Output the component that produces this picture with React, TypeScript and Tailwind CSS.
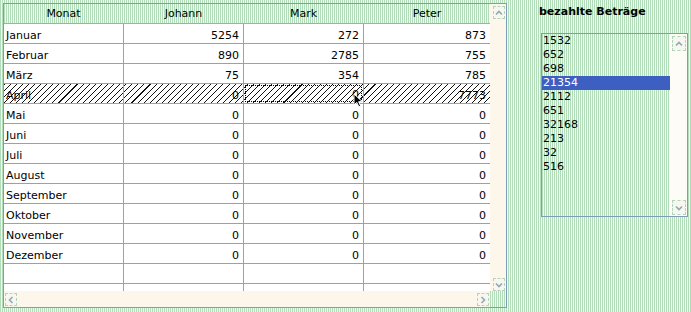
import React from "react";

const months = [
  "Januar", "Februar", "März", "April", "Mai", "Juni",
  "Juli", "August", "September", "Oktober", "November", "Dezember",
];

const values: number[][] = [
  [5254, 272, 873],
  [890, 2785, 755],
  [75, 354, 785],
  [0, 0, 7773],
];

const amounts = ["1532", "652", "698", "21354", "2112", "651", "32168", "213", "32", "516"];

type Dir = "up" | "down" | "left" | "right";

const chevrons: Record<Dir, string> = {
  up: "M2 6.5 L5 3.5 L8 6.5",
  down: "M2 3.5 L5 6.5 L8 3.5",
  left: "M6.5 2 L3.5 5 L6.5 8",
  right: "M3.5 2 L6.5 5 L3.5 8",
};

function ScrollBtn({ dir, big }: { dir: Dir; big?: boolean }) {
  return (
    <div
      className={
        big
          ? "w-[14px] h-[15px] border border-dashed border-[#b4d3ba] bg-[#f6f8ef] flex items-center justify-center"
          : "w-[12px] h-[13px] border border-dashed border-[#b4d3ba] bg-[#f6f8ef] flex items-center justify-center"
      }
    >
      <svg width="10" height="10" viewBox="0 0 10 10">
        <path d={chevrons[dir]} fill="none" stroke="#97a5b3" strokeWidth="1.6" />
      </svg>
    </div>
  );
}

function Cell({ text, right, last }: { text: string; right?: boolean; last?: boolean }) {
  return (
    <div
      className={
        (last ? "w-[126px] " : "w-[120px] border-r border-[#a0a0a0] ") +
        (right ? "flex items-center justify-end pr-[4px] pt-[5px]" : "flex items-center pl-[2px] pt-[5px]")
      }
    >
      {text}
    </div>
  );
}

export default function App() {
  return (
    <div className="w-[691px] h-[312px] flex pt-[3px] pl-[3px] font-['DejaVu_Sans',sans-serif] text-[11px] text-black bg-[image:repeating-linear-gradient(90deg,#b2dcba_0px,#b2dcba_1px,#f3faf1_1px,#f3faf1_2px)] overflow-hidden">
      {/* Tabelle */}
      <div className="w-[504px] h-[305px] border border-[#7f9db9] flex flex-col">
        <div className="flex h-[287px]">
          <div className="relative w-[486px] flex flex-col bg-white">
            <div className="flex h-[20px] border-b border-[#9db2a1] bg-[image:repeating-linear-gradient(90deg,#b2dcba_0px,#b2dcba_1px,#f3faf1_1px,#f3faf1_2px)]">
              {["Monat", "Johann", "Mark", "Peter"].map((h, i) => (
                <div
                  key={h}
                  className={
                    i < 3
                      ? "w-[120px] border-r border-[#f4faf4] flex items-center justify-center pt-[2px]"
                      : "w-[126px] flex items-center justify-center pt-[2px]"
                  }
                >
                  {h}
                </div>
              ))}
            </div>
            {months.map((m, i) => {
              const v = values[i] ?? [0, 0, 0];
              const hatched = i === 3;
              return (
                <div
                  key={m}
                  className={
                    hatched
                      ? "flex h-[20px] border-b border-[#a0a0a0] bg-[image:repeating-linear-gradient(135deg,#111_0px,#111_0.75px,transparent_0.75px,transparent_4.3px)]"
                      : "flex h-[20px] border-b border-[#a0a0a0]"
                  }
                >
                  <Cell text={m} />
                  <Cell text={String(v[0])} right />
                  {hatched ? (
                    <div className="w-[120px] border-r border-[#a0a0a0] p-[1px]">
                      <div className="h-full border border-dotted border-black flex items-center justify-end pr-[2px] pt-[3px]">
                        {v[1]}
                      </div>
                    </div>
                  ) : (
                    <Cell text={String(v[1])} right />
                  )}
                  <Cell text={String(v[2])} right last />
                </div>
              );
            })}
            <div className="flex h-[20px] border-b border-[#a0a0a0]">
              <Cell text="" />
              <Cell text="" />
              <Cell text="" />
              <Cell text="" last />
            </div>
            <div className="flex flex-1">
              <Cell text="" />
              <Cell text="" />
              <Cell text="" />
              <Cell text="" last />
            </div>
            {/* Mauszeiger */}
            <svg className="absolute left-[349px] top-[89px]" width="11" height="15" viewBox="0 0 11 15">
              <path d="M1 1 L1 12 L3.8 9.4 L5.8 13.8 L7.6 13 L5.6 8.7 L9.4 8.7 Z" fill="#000" stroke="#fff" strokeWidth="1" />
            </svg>
          </div>
          <div className="flex-1 bg-[#fcf7ea] flex flex-col justify-between pl-[3px] pt-[2px]">
            <ScrollBtn dir="up" />
            <ScrollBtn dir="down" />
          </div>
        </div>
        <div className="flex flex-1">
          <div className="w-[486px] bg-[#fcf7ea] flex justify-between pl-[1px] pr-[1px] pt-[2px]">
            <ScrollBtn dir="left" />
            <ScrollBtn dir="right" />
          </div>
          <div className="flex-1" />
        </div>
      </div>

      {/* Liste */}
      <div className="ml-[32px] flex flex-col">
        <div className="h-[14px] mt-[2px] font-bold leading-[14px]">bezahlte Beträge</div>
        <div className="ml-[2px] mt-[14px] w-[147px] h-[184px] border border-[#7f9db9] flex">
          <div className="w-[128px] flex flex-col">
            {amounts.map((a, i) => (
              <div
                key={a}
                className={
                  i === 3
                    ? "h-[14px] leading-[14px] pl-[1px] bg-[#3e5fc2] text-white"
                    : "h-[14px] leading-[14px] pl-[1px]"
                }
              >
                {a}
              </div>
            ))}
          </div>
          <div className="flex-1 bg-[#fdfcf6] flex flex-col justify-between pl-[2px] pt-[2px] pb-[1px]">
            <ScrollBtn dir="up" big />
            <ScrollBtn dir="down" big />
          </div>
        </div>
      </div>
    </div>
  );
}
